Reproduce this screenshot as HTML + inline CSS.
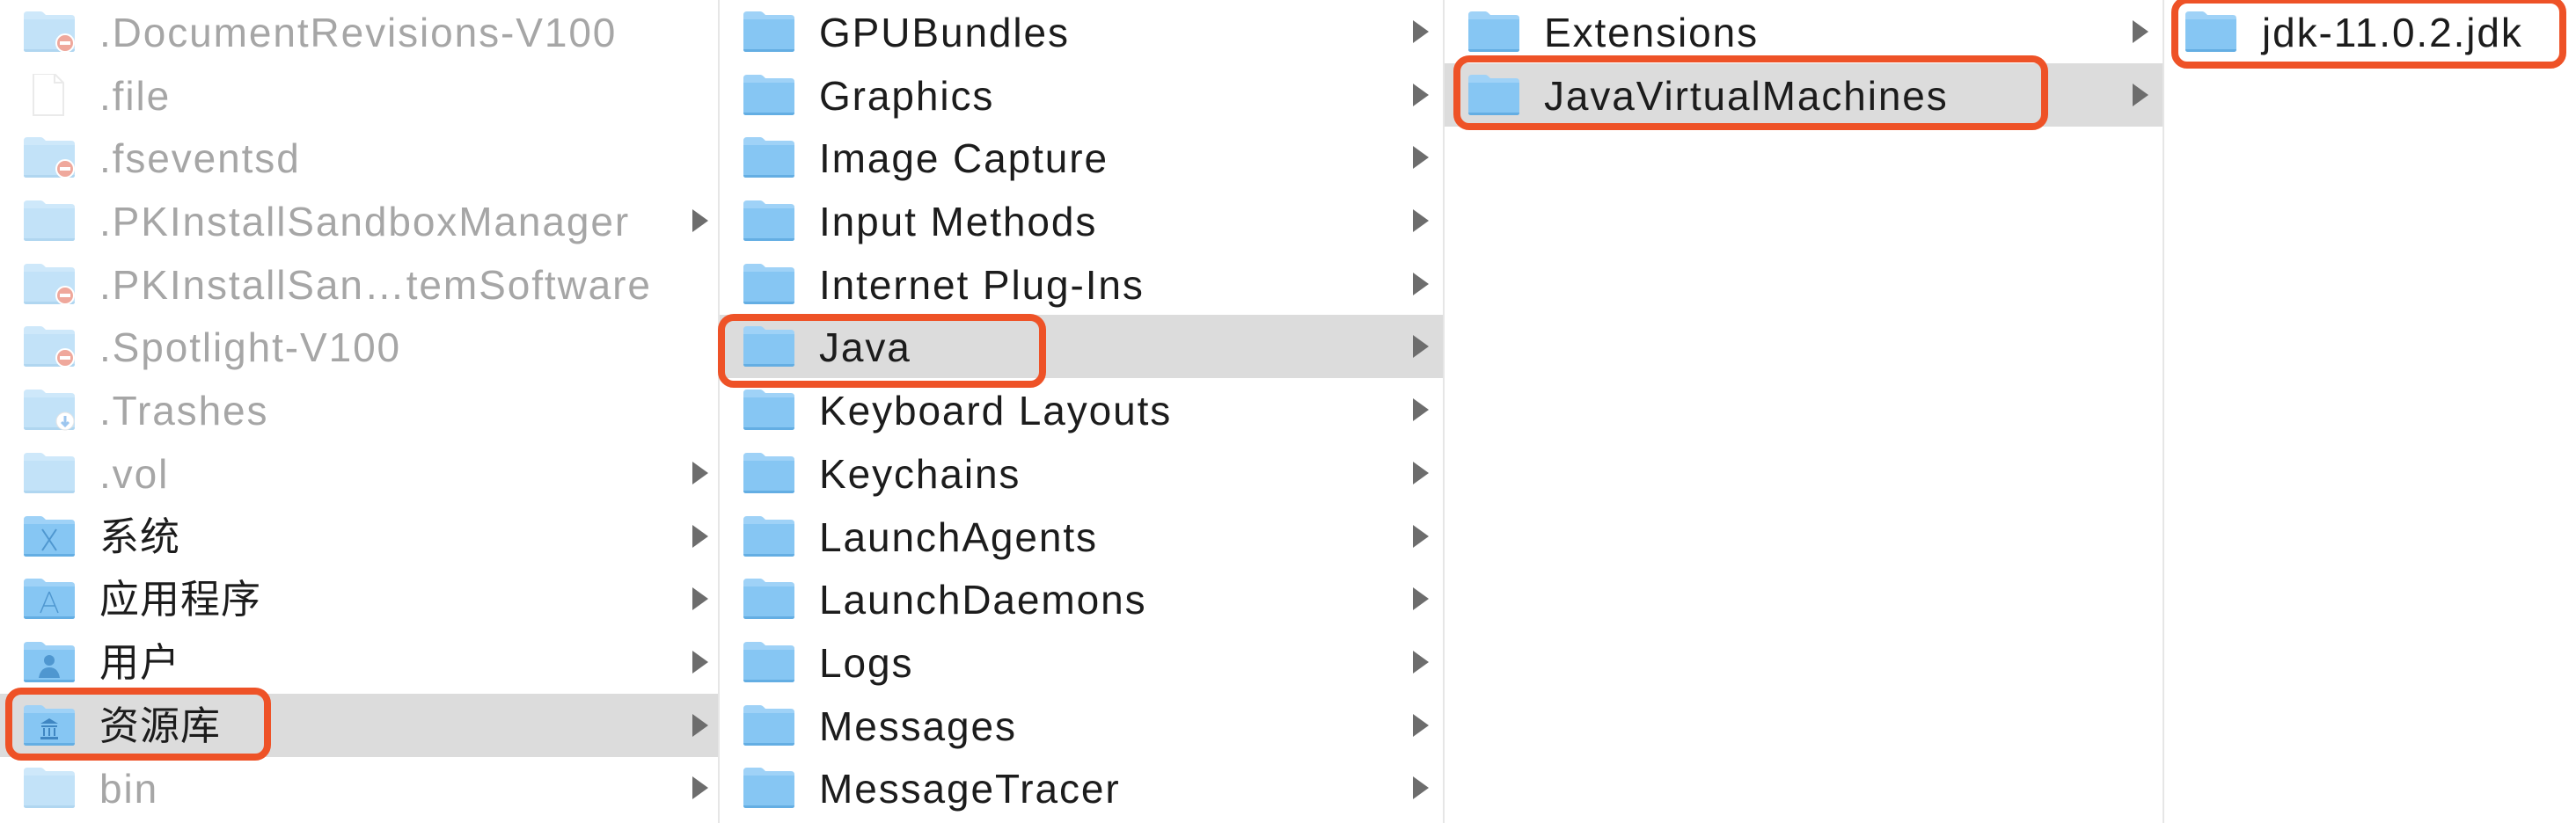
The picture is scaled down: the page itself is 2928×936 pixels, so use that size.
<!DOCTYPE html>
<html><head><meta charset="utf-8">
<style>
*{margin:0;padding:0;box-sizing:border-box}
html,body{width:2928px;height:936px;overflow:hidden;background:#fff}
body{position:relative;font-family:"Liberation Sans","Noto Sans CJK SC",sans-serif}
.col{position:absolute;top:0;height:936px;overflow:hidden}
.sep{position:absolute;top:0;width:2px;height:936px;background:#e6e6e6}
.r{position:absolute;left:0;right:0;height:72px}
.r.h{background:#dcdcdc}
.r svg.f{position:absolute;left:26px;top:12px;width:60px;height:48px}
.r .t{position:absolute;left:113px;top:1px;line-height:72px;font-size:46px;letter-spacing:1.9px;color:#1c1c1c;white-space:nowrap}
.r .t.cjk{letter-spacing:1px;font-size:45px}
.g svg.f{opacity:.5}
.g .t{color:#a6a6a6}
.r .c{position:absolute;top:23px;width:0;height:0;border-top:13px solid transparent;border-bottom:13px solid transparent;border-left:18px solid #6d6d6d}
.box{position:absolute;border:8px solid #ee5227;border-radius:18px}
</style></head><body>
<svg width="0" height="0" style="position:absolute">
<defs>
<symbol id="fold" viewBox="0 0 60 48">
<path d="M1 5 Q1 1 5 1 H20 Q22 1 24 3 L26 5 H55 Q59 5 59 9 V44 Q59 47 56 47 H4 Q1 47 1 44Z" fill="#9fd2f7"/>
<path d="M1 10 H59 V44 Q59 47 56 47 H4 Q1 47 1 44Z" fill="#86c6f3"/>
<path d="M1 44 H59 Q59 47 56 47 H4 Q1 47 1 44Z" fill="#64aee3"/>
</symbol>
<symbol id="minus" viewBox="0 0 60 48">
<circle cx="48" cy="37" r="10" fill="#e0533c" stroke="#fff" stroke-width="2"/>
<rect x="42" y="35" width="12" height="4" fill="#fff"/>
</symbol>
</defs>
</svg>

<div class="col" style="left:0;width:816px">
<div class="r g" style="top:0"><svg class="f"><use href="#fold"/><use href="#minus"/></svg><span class="t">.DocumentRevisions-V100</span></div>
<div class="r g" style="top:72px"><svg class="f" viewBox="0 0 60 48"><path d="M12 0 H36 L46 10 V47 H12Z" fill="#fff" stroke="#d6d6d6" stroke-width="2"/><path d="M36 0 V10 H46" fill="none" stroke="#d6d6d6" stroke-width="2"/></svg><span class="t">.file</span></div>
<div class="r g" style="top:143px"><svg class="f"><use href="#fold"/><use href="#minus"/></svg><span class="t">.fseventsd</span></div>
<div class="r g" style="top:215px"><svg class="f"><use href="#fold"/></svg><span class="t">.PKInstallSandboxManager</span><span class="c" style="left:787px"></span></div>
<div class="r g" style="top:287px"><svg class="f"><use href="#fold"/><use href="#minus"/></svg><span class="t">.PKInstallSan…temSoftware</span></div>
<div class="r g" style="top:358px"><svg class="f"><use href="#fold"/><use href="#minus"/></svg><span class="t">.Spotlight-V100</span></div>
<div class="r g" style="top:430px"><svg class="f" viewBox="0 0 60 48"><use href="#fold"/><circle cx="48" cy="37" r="10" fill="#fff" stroke="#ccc" stroke-width="1"/><path d="M48 31 V42 M44 38 L48 42 L52 38" stroke="#3d8fe0" stroke-width="3" fill="none"/></svg><span class="t">.Trashes</span></div>
<div class="r g" style="top:502px"><svg class="f"><use href="#fold"/></svg><span class="t">.vol</span><span class="c" style="left:787px"></span></div>
<div class="r" style="top:574px"><svg class="f" viewBox="0 0 60 48"><use href="#fold"/><path d="M22 16 L38 40 M38 16 L22 40" stroke="#4f97d0" stroke-width="2"/></svg><span class="t cjk">系统</span><span class="c" style="left:787px"></span></div>
<div class="r" style="top:645px"><svg class="f" viewBox="0 0 60 48"><use href="#fold"/><path d="M30 16 L20 40 M30 16 L40 40 M23 32 H37" stroke="#4f97d0" stroke-width="1.5" fill="none"/></svg><span class="t cjk">应用程序</span><span class="c" style="left:787px"></span></div>
<div class="r" style="top:717px"><svg class="f" viewBox="0 0 60 48"><use href="#fold"/><circle cx="30" cy="22" r="6" fill="#4f97d0"/><path d="M18 42 Q20 30 30 30 Q40 30 42 42Z" fill="#4f97d0"/></svg><span class="t cjk">用户</span><span class="c" style="left:787px"></span></div>
<div class="r h" style="top:789px"><svg class="f" viewBox="0 0 60 48"><use href="#fold"/><path d="M20 22 L30 16 L40 22Z M21 24 H39 V26 H21Z M23 27 H25 V36 H23Z M29 27 H31 V36 H29Z M35 27 H37 V36 H35Z M20 37 H40 V40 H20Z" fill="#3f86c2"/></svg><span class="t cjk">资源库</span><span class="c" style="left:787px"></span></div>
<div class="r g" style="top:860px"><svg class="f"><use href="#fold"/></svg><span class="t">bin</span><span class="c" style="left:787px"></span></div>
</div>
<div class="sep" style="left:816px"></div>

<div class="col" style="left:818px;width:822px">
<div class="r" style="top:0"><svg class="f"><use href="#fold"/></svg><span class="t">GPUBundles</span><span class="c" style="left:788px"></span></div>
<div class="r" style="top:72px"><svg class="f"><use href="#fold"/></svg><span class="t">Graphics</span><span class="c" style="left:788px"></span></div>
<div class="r" style="top:143px"><svg class="f"><use href="#fold"/></svg><span class="t">Image Capture</span><span class="c" style="left:788px"></span></div>
<div class="r" style="top:215px"><svg class="f"><use href="#fold"/></svg><span class="t">Input Methods</span><span class="c" style="left:788px"></span></div>
<div class="r" style="top:287px"><svg class="f"><use href="#fold"/></svg><span class="t">Internet Plug-Ins</span><span class="c" style="left:788px"></span></div>
<div class="r h" style="top:358px"><svg class="f"><use href="#fold"/></svg><span class="t">Java</span><span class="c" style="left:788px"></span></div>
<div class="r" style="top:430px"><svg class="f"><use href="#fold"/></svg><span class="t">Keyboard Layouts</span><span class="c" style="left:788px"></span></div>
<div class="r" style="top:502px"><svg class="f"><use href="#fold"/></svg><span class="t">Keychains</span><span class="c" style="left:788px"></span></div>
<div class="r" style="top:574px"><svg class="f"><use href="#fold"/></svg><span class="t">LaunchAgents</span><span class="c" style="left:788px"></span></div>
<div class="r" style="top:645px"><svg class="f"><use href="#fold"/></svg><span class="t">LaunchDaemons</span><span class="c" style="left:788px"></span></div>
<div class="r" style="top:717px"><svg class="f"><use href="#fold"/></svg><span class="t">Logs</span><span class="c" style="left:788px"></span></div>
<div class="r" style="top:789px"><svg class="f"><use href="#fold"/></svg><span class="t">Messages</span><span class="c" style="left:788px"></span></div>
<div class="r" style="top:860px"><svg class="f"><use href="#fold"/></svg><span class="t">MessageTracer</span><span class="c" style="left:788px"></span></div>
</div>
<div class="sep" style="left:1640px"></div>

<div class="col" style="left:1642px;width:816px">
<div class="r" style="top:0"><svg class="f"><use href="#fold"/></svg><span class="t">Extensions</span><span class="c" style="left:782px"></span></div>
<div class="r h" style="top:72px"><svg class="f"><use href="#fold"/></svg><span class="t">JavaVirtualMachines</span><span class="c" style="left:782px"></span></div>
</div>
<div class="sep" style="left:2458px"></div>

<div class="col" style="left:2460px;width:468px">
<div class="r" style="top:0"><svg class="f" style="left:23px"><use href="#fold"/></svg><span class="t" style="left:111px">jdk-11.0.2.jdk</span></div>
</div>

<div class="box" style="left:6px;top:782px;width:302px;height:83px"></div>
<div class="box" style="left:816px;top:357px;width:373px;height:84px"></div>
<div class="box" style="left:1652px;top:63px;width:676px;height:85px"></div>
<div class="box" style="left:2468px;top:-4px;width:449px;height:82px"></div>
</body></html>
